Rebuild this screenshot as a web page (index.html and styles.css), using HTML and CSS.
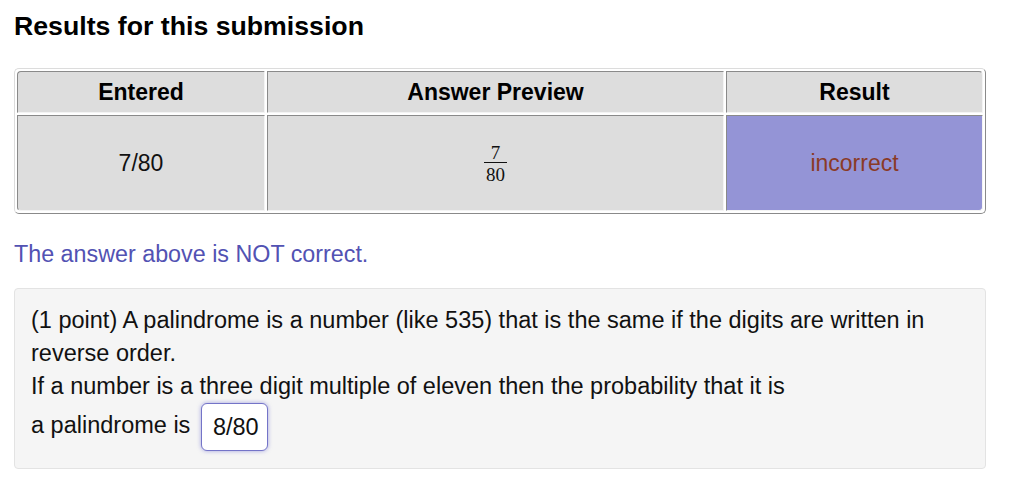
FILE: index.html
```html
<!DOCTYPE html>
<html>
<head>
<meta charset="utf-8">
<link rel="stylesheet" href="styles.css">
</head>
<body>
<h2 class="title">Results for this submission</h2>
<table class="results">
  <thead>
    <tr>
      <th class="c1">Entered</th>
      <th class="c2">Answer Preview</th>
      <th class="c3">Result</th>
    </tr>
  </thead>
  <tbody>
    <tr>
      <td class="c1">7/80</td>
      <td class="c2"><span class="frac"><span class="num">7</span><span class="den">80</span></span></td>
      <td class="c3 incorrect">incorrect</td>
    </tr>
  </tbody>
</table>
<p class="verdict">The answer above is NOT correct.</p>
<div class="problem">
  <p>(1 point) A palindrome is a number (like 535) that is the same if the digits are written in reverse order.<br>
  If a number is a three digit multiple of eleven then the probability that it is<br>
  a palindrome is <span class="answer">8/80</span></p>
</div>
</body>
</html>
```
FILE: styles.css
```css
html, body {
  margin: 0;
  padding: 0;
  background: #fff;
}
body {
  padding: 0 14px;
  font-family: "Liberation Sans", Arial, sans-serif;
  color: #111;
}
.title {
  margin: 0;
  padding-top: 10px;
  font-size: 26.7px;
  line-height: 32px;
  font-weight: bold;
  color: #000;
}
.results {
  margin-top: 26px;
  width: 972px;
  border-collapse: separate;
  border-spacing: 2px;
  border: 1px solid;
  border-color: #dcdcdc #8a8a8a #8a8a8a #dcdcdc;
  border-radius: 5px;
  box-sizing: border-box;
}
.results th,
.results td {
  background: #dddddd;
  border: 1px solid;
  border-color: #8a8a8a #f4f4f4 #f4f4f4 #8a8a8a;
  text-align: center;
  font-size: 23px;
  padding: 0;
}
.results th {
  height: 40px;
  font-weight: bold;
  color: #000;
}
.results td {
  height: 94px;
  color: #111;
}
.results thead th.c1 { border-top-left-radius: 4px; }
.results thead th.c3 { border-top-right-radius: 4px; }
.results tbody td.c1 { border-bottom-left-radius: 4px; }
.results tbody td.c3 { border-bottom-right-radius: 4px; }
.c1 { width: 246px; }
.c2 { width: 455px; }
.c3 { width: auto; }
.results td.incorrect {
  background: #9494d6;
  color: #8a3a26;
}
.frac {
  display: inline-flex;
  flex-direction: column;
  align-items: center;
  vertical-align: middle;
  font-family: "Liberation Serif", "Times New Roman", serif;
  font-size: 19px;
  line-height: 17px;
  color: #111;
}
.frac .num {
  padding: 0 2px 1px;
  border-bottom: 1px solid #111;
  align-self: stretch;
  text-align: center;
}
.frac .den {
  padding: 3px 2px 0;
}
.verdict {
  margin: 27px 0 0;
  font-size: 23.3px;
  line-height: 26px;
  color: #5252b3;
}
.problem {
  margin-top: 21px;
  width: 972px;
  box-sizing: border-box;
  background: #f5f5f5;
  border: 1px solid #e3e3e3;
  border-radius: 4px;
  padding: 15px 16px 17px;
}
.problem p {
  margin: 0;
  font-size: 23.5px;
  line-height: 33px;
  color: #111;
}
.answer {
  display: inline-block;
  vertical-align: middle;
  margin-left: 4px;
  width: 67px;
  height: 48px;
  box-sizing: border-box;
  padding: 0 0 0 11px;
  line-height: 46px;
  background: #fff;
  border: 1.5px solid #7474c8;
  border-radius: 6px;
  box-shadow: 0 0 4px rgba(110, 110, 210, 0.6);
  color: #111;
}
```
